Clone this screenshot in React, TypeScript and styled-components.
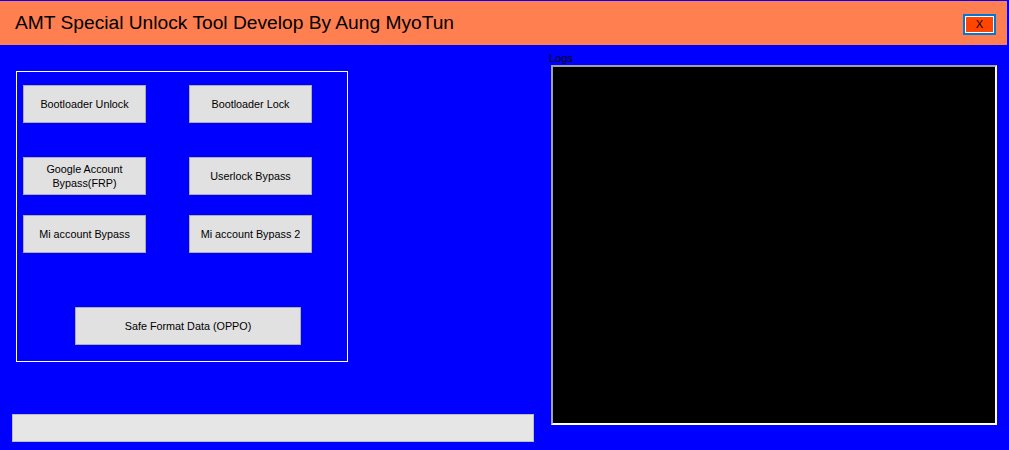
import styled, { createGlobalStyle } from "styled-components";

const GlobalStyle = createGlobalStyle`
  *, *::before, *::after {
    box-sizing: border-box;
  }
  html, body {
    margin: 0;
    padding: 0;
    background: #0000ff;
    font-family: "Liberation Sans", Arial, sans-serif;
    overflow: hidden;
  }
`;

const Window = styled.div`
  width: 1009px;
  height: 450px;
  background: #0000ff;
  padding-top: 1px;
`;

const TitleBar = styled.div`
  width: 1007px;
  height: 44px;
  background: #ff7f50;
  display: flex;
  align-items: center;
  justify-content: space-between;
  padding: 0 11px 0 15px;
`;

const Title = styled.h1`
  margin: 0;
  font-size: 19.2px;
  font-weight: normal;
  color: #000;
  line-height: 22px;
`;

const CloseButton = styled.button`
  width: 33px;
  height: 21px;
  margin-top: 2px;
  padding: 0;
  border: 2px solid #0078d7;
  box-shadow: inset 0 0 0 1px #fff;
  background: #ff4500;
  color: #000;
  font-family: "Liberation Sans", Arial, sans-serif;
  font-size: 11px;
  line-height: 15px;
  cursor: pointer;
`;

const Main = styled.div`
  display: flex;
`;

const LeftColumn = styled.div`
  width: 549px;
  padding-left: 12px;
  display: flex;
  flex-direction: column;
`;

const GroupBox = styled.div`
  width: 332px;
  height: 291px;
  margin: 26px 0 0 4px;
  border: 1px solid #ffffff;
  padding: 13px 0 0 6px;
`;

const ButtonRow = styled.div<{ $mt?: number; $indent?: number }>`
  display: flex;
  gap: 43px;
  margin-top: ${(p) => p.$mt ?? 0}px;
  padding-left: ${(p) => p.$indent ?? 0}px;
`;

const ToolButton = styled.button<{ $w?: number }>`
  width: ${(p) => p.$w ?? 123}px;
  height: 38px;
  padding: 0 2px;
  background: #e1e1e1;
  border: 1px solid #adadad;
  color: #000;
  font-family: "Liberation Sans", Arial, sans-serif;
  font-size: 10.8px;
  line-height: 14px;
  text-align: center;
  cursor: pointer;
`;

const ProgressBar = styled.div`
  width: 522px;
  height: 28px;
  margin-top: 52px;
  background: #e6e6e6;
  border: 1px solid #bcbcbc;
`;

const RightColumn = styled.div`
  padding-top: 7px;
  display: flex;
  flex-direction: column;
`;

const LogsLabel = styled.div`
  font-size: 11px;
  line-height: 13px;
  height: 13px;
  color: #000000;
`;

const LogsBox = styled.div`
  width: 446px;
  height: 360px;
  margin-left: 2px;
  background: #000;
  border-style: solid;
  border-width: 2px;
  border-color: #a0a0a0 #ffffff #ffffff #a0a0a0;
`;

export default function App() {
  return (
    <>
      <GlobalStyle />
      <Window>
        <TitleBar>
          <Title>AMT Special Unlock Tool Develop By Aung MyoTun</Title>
          <CloseButton>X</CloseButton>
        </TitleBar>
        <Main>
          <LeftColumn>
            <GroupBox>
              <ButtonRow>
                <ToolButton>Bootloader Unlock</ToolButton>
                <ToolButton>Bootloader Lock</ToolButton>
              </ButtonRow>
              <ButtonRow $mt={34}>
                <ToolButton>
                  Google Account
                  <br />
                  Bypass(FRP)
                </ToolButton>
                <ToolButton>Userlock Bypass</ToolButton>
              </ButtonRow>
              <ButtonRow $mt={20}>
                <ToolButton>Mi account Bypass</ToolButton>
                <ToolButton>Mi account Bypass 2</ToolButton>
              </ButtonRow>
              <ButtonRow $mt={54} $indent={52}>
                <ToolButton $w={226}>Safe Format Data (OPPO)</ToolButton>
              </ButtonRow>
            </GroupBox>
            <ProgressBar />
          </LeftColumn>
          <RightColumn>
            <LogsLabel>Logs</LogsLabel>
            <LogsBox />
          </RightColumn>
        </Main>
      </Window>
    </>
  );
}
